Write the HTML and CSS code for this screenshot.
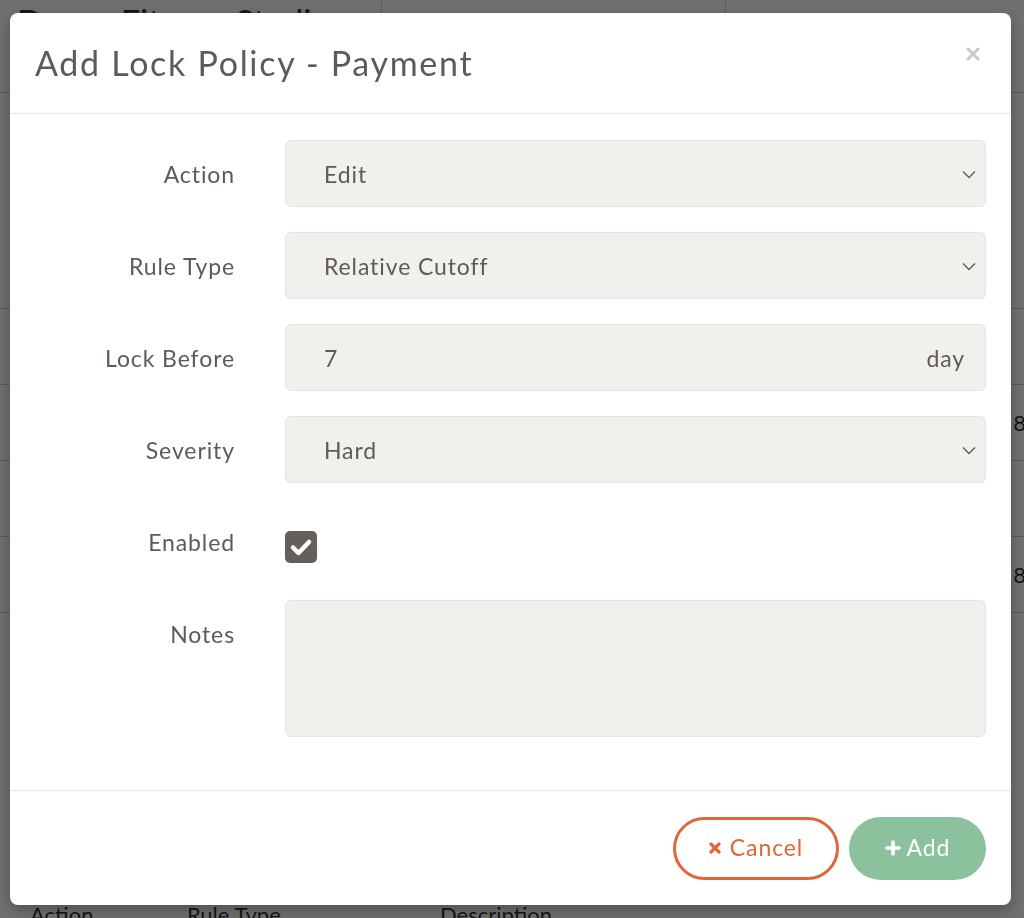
FILE: index.html
```html
<!DOCTYPE html>
<html lang="en">
<head>
    <meta charset="UTF-8">
    <meta name="viewport" content="width=device-width, initial-scale=1.0">
    <title>Add Lock Policy - Payment</title>
    <link rel="stylesheet" href="styles.css">
</head>
<body>
    <!-- page behind the modal -->
    <div class="page">
        <header class="topbar">
            <div class="topbar-cell brand">Dance Fitness Studio</div>
            <div class="topbar-cell"></div>
            <div class="topbar-cell"></div>
        </header>
        <div class="policy-table">
            <div class="policy-row"></div>
            <div class="policy-row"><span class="num">8</span></div>
            <div class="policy-row"></div>
            <div class="policy-row"><span class="num">8</span></div>
        </div>
        <div class="table-head">
            <span class="col-action">Action</span>
            <span class="col-rule">Rule Type</span>
            <span class="col-desc">Description</span>
        </div>
    </div>

    <div class="backdrop"></div>

    <div class="modal">
        <div class="modal-header">
            <h2 class="modal-title">Add Lock Policy - Payment</h2>
            <button class="modal-close" type="button" aria-label="Close">
                <svg width="14" height="14" viewBox="0 0 14 14">
                    <path d="M2 2 L12 12 M12 2 L2 12" stroke="#c9c9c9" stroke-width="3" stroke-linecap="round"/>
                </svg>
            </button>
        </div>

        <form class="modal-body" id="policyForm">
            <div class="form-row">
                <label class="form-label">Action</label>
                <div class="field select-box">
                    <span>Edit</span>
                    <svg class="chevron" width="14" height="9" viewBox="0 0 14 9">
                        <path d="M1 1.5 L7 7.5 L13 1.5" fill="none" stroke="#5f5a55" stroke-width="1.3"/>
                    </svg>
                </div>
            </div>

            <div class="form-row">
                <label class="form-label">Rule Type</label>
                <div class="field select-box">
                    <span>Relative Cutoff</span>
                    <svg class="chevron" width="14" height="9" viewBox="0 0 14 9">
                        <path d="M1 1.5 L7 7.5 L13 1.5" fill="none" stroke="#5f5a55" stroke-width="1.3"/>
                    </svg>
                </div>
            </div>

            <div class="form-row">
                <label class="form-label">Lock Before</label>
                <div class="field unit-box">
                    <span>7</span>
                    <span class="unit">day</span>
                </div>
            </div>

            <div class="form-row">
                <label class="form-label">Severity</label>
                <div class="field select-box">
                    <span>Hard</span>
                    <svg class="chevron" width="14" height="9" viewBox="0 0 14 9">
                        <path d="M1 1.5 L7 7.5 L13 1.5" fill="none" stroke="#5f5a55" stroke-width="1.3"/>
                    </svg>
                </div>
            </div>

            <div class="form-row">
                <label class="form-label">Enabled</label>
                <div class="check-cell">
                    <span class="checkbox">
                        <svg width="32" height="32" viewBox="0 0 32 32">
                            <path d="M8 16.5 L13.5 22 L24 11" fill="none" stroke="#fff" stroke-width="4.5" stroke-linecap="round" stroke-linejoin="round"/>
                        </svg>
                    </span>
                </div>
            </div>

            <div class="form-row last">
                <label class="form-label">Notes</label>
                <div class="field notes"></div>
            </div>
        </form>

        <div class="modal-footer">
            <button type="button" class="btn btn-cancel">
                <svg width="12" height="12" viewBox="0 0 12 12">
                    <path d="M2 2 L10 10 M10 2 L2 10" stroke="#e0663a" stroke-width="3.2" stroke-linecap="round"/>
                </svg>
                Cancel
            </button>
            <button type="submit" form="policyForm" class="btn btn-add">
                <svg width="16" height="16" viewBox="0 0 16 16">
                    <path d="M8 2 L8 14 M2 8 L14 8" stroke="#fff" stroke-width="3.6" stroke-linecap="round"/>
                </svg>
                Add
            </button>
        </div>
    </div>
</body>
</html>
```

FILE: styles.css
```css
/* Global styles */
body {
    margin: 0;
    font-family: 'Lato', 'Open Sans', sans-serif;
    color: #333;
    background: #fff;
}

/* Page behind the modal */
.page {
    height: 918px;
    overflow: hidden;
}

.topbar {
    display: flex;
    height: 92px;
    border-bottom: 1px solid #ccc;
}

.topbar-cell {
    box-sizing: border-box;
    width: 344px;
    border-right: 1px solid #ccc;
}

.topbar-cell:first-child {
    width: 382px;
}

.topbar-cell:last-child {
    flex: 1;
    border-right: none;
}

.brand {
    font-size: 34px;
    padding: 2px 0 0 17px;
    line-height: 1.2;
}

.policy-table {
    margin-top: 215px;
}

.policy-row {
    height: 75px;
    border-top: 1px solid #ccc;
    display: flex;
    justify-content: flex-end;
    align-items: center;
    font-size: 22px;
}

.policy-row:last-child {
    border-bottom: 1px solid #ccc;
}

.num {
    margin-right: -2px;
}

.table-head {
    display: flex;
    margin-top: 288px;
    font-size: 22px;
    height: 30px;
}

.col-action {
    margin-left: 30px;
    width: 157px;
}

.col-rule {
    width: 253px;
}

.backdrop {
    position: fixed;
    inset: 0;
    background: rgba(0, 0, 0, 0.56);
}

/* Modal */
.modal {
    position: fixed;
    left: 10px;
    top: 13px;
    width: 1001px;
    height: 892px;
    background: #fff;
    border-radius: 8px;
    box-shadow: 0 5px 15px rgba(0, 0, 0, 0.3);
    display: flex;
    flex-direction: column;
    color: #5f5a55;
    letter-spacing: 0.9px;
}

.modal-header {
    height: 100px;
    border-bottom: 1px solid #e5e5e5;
    display: flex;
    justify-content: space-between;
    align-items: center;
    padding: 0 31px 0 25px;
}

.modal-title {
    margin: 0 0 2px;
    font-size: 34px;
    font-weight: 400;
    letter-spacing: 1.7px;
    color: #5f5a55;
}

.modal-close {
    align-self: flex-start;
    margin-top: 34px;
    background: none;
    border: none;
    padding: 0;
    cursor: pointer;
}

.modal-body {
    flex: 1;
    padding: 26px 25px 0 0;
}

.form-row {
    display: grid;
    grid-template-columns: 225px 1fr;
    column-gap: 50px;
    margin-bottom: 25px;
}

.form-label {
    text-align: right;
    font-size: 23px;
    line-height: 26px;
    padding-top: 21px;
}

.field {
    box-sizing: border-box;
    height: 67px;
    background: #f1f0ed;
    border: 1px solid #e6e4e0;
    border-radius: 6px;
    font-size: 23px;
    display: flex;
    align-items: center;
    justify-content: space-between;
    padding: 0 20px 0 38px;
}

.select-box {
    padding-right: 9px;
}

.chevron {
    margin-top: 2px;
}

.check-cell {
    height: 67px;
}

.checkbox {
    display: block;
    width: 32px;
    height: 32px;
    margin-top: 23px;
    border-radius: 5px;
    background: #645f5a;
}

.checkbox svg {
    display: block;
}

.notes {
    height: 137px;
}

.modal-footer {
    border-top: 1px solid #e5e5e5;
    height: 115px;
    box-sizing: border-box;
    padding: 26px 25px;
    display: flex;
    justify-content: flex-end;
    gap: 10px;
}

.btn {
    height: 63px;
    border-radius: 32px;
    font-family: inherit;
    font-size: 23px;
    letter-spacing: 0.9px;
    display: flex;
    align-items: center;
    justify-content: center;
    gap: 9px;
    padding: 0 0 3px;
    cursor: pointer;
    box-sizing: border-box;
}

.btn svg {
    margin-top: 2px;
}

.btn-cancel {
    width: 166px;
    background: #fff;
    border: 3px solid #e0663a;
    color: #e0663a;
}

.btn-add {
    width: 137px;
    background: #8bc29d;
    border: none;
    color: #fff;
    gap: 6px;
}
```
